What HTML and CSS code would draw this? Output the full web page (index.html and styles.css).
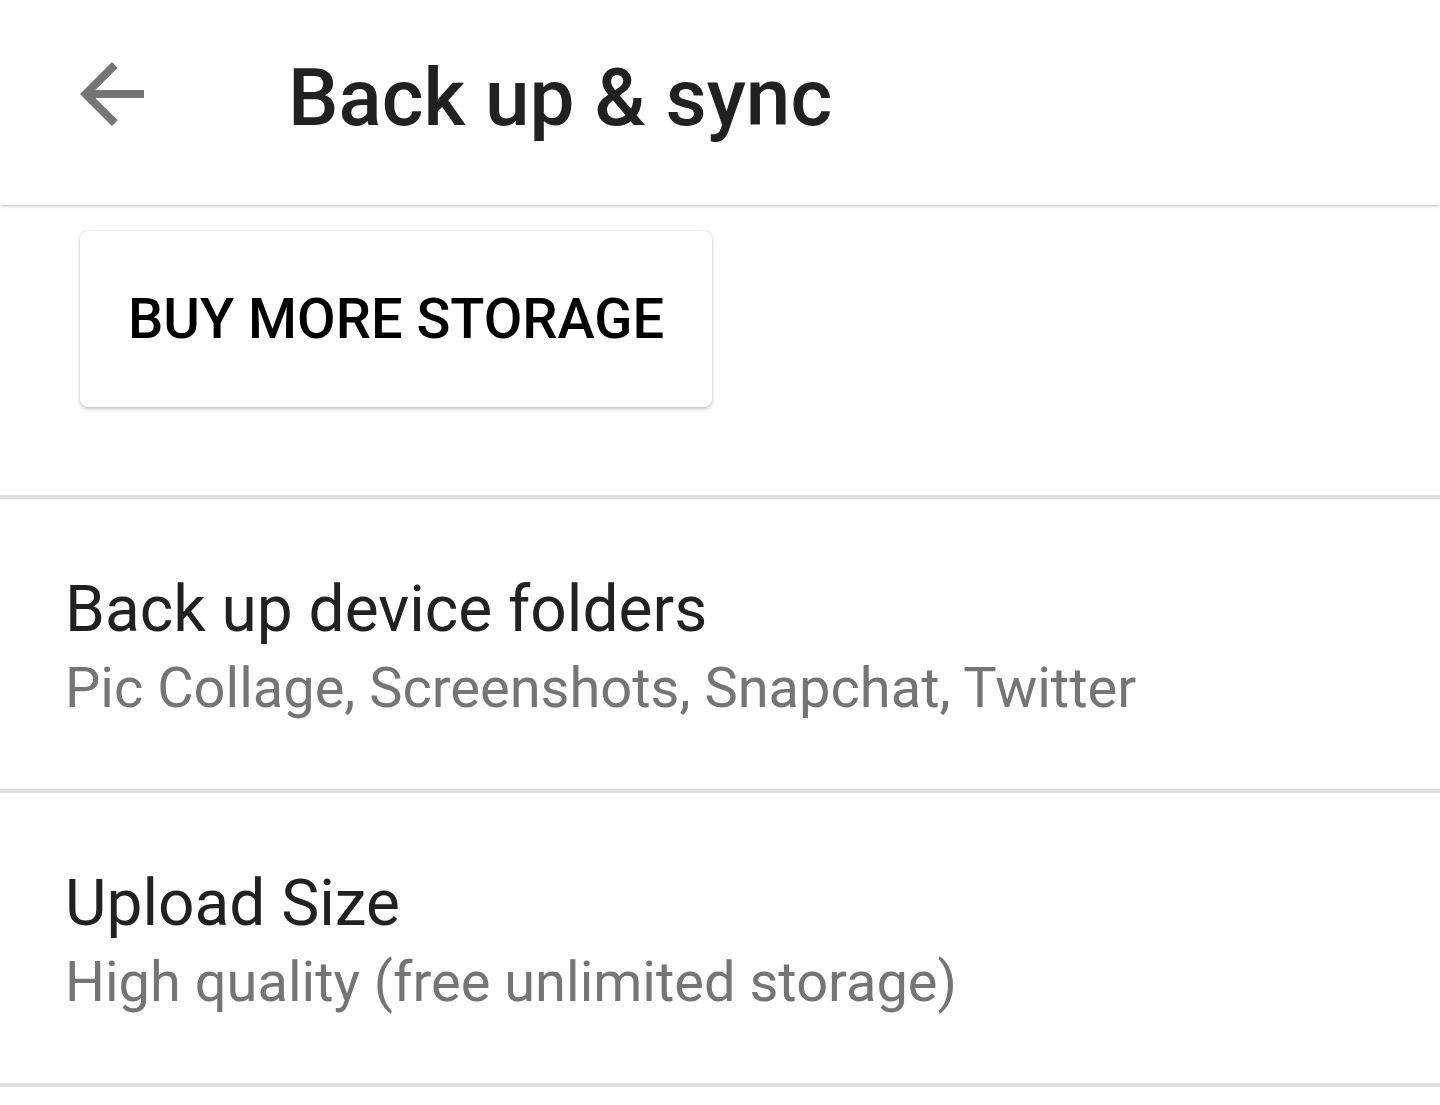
FILE: index.html
```html
<!DOCTYPE html>
<html lang="en">
<head>
<meta charset="utf-8">
<title>Back up &amp; sync</title>
<link rel="stylesheet" href="styles.css">
</head>
<body>
<header class="appbar">
  <svg class="back" viewBox="0 0 24 24" width="96" height="96" aria-hidden="true"><path d="M20 11H7.83l5.59-5.59L12 4l-8 8 8 8 1.41-1.41L7.83 13H20v-2z"/></svg>
  <h1 class="title">Back up &amp; sync</h1>
</header>
<main>
  <div class="storage">
    <button class="buy">BUY MORE STORAGE</button>
  </div>
  <div class="item">
    <div class="item-title">Back up device folders</div>
    <div class="item-sub">Pic Collage, Screenshots, Snapchat, Twitter</div>
  </div>
  <div class="item">
    <div class="item-title">Upload Size</div>
    <div class="item-sub">High quality (free unlimited storage)</div>
  </div>
  <div class="end"></div>
</main>
</body>
</html>
```
FILE: styles.css
```css
html, body {
  margin: 0;
  padding: 0;
  background: #ffffff;
  font-family: Roboto, "Noto Sans", sans-serif;
}
.appbar {
  height: 205px;
  box-sizing: border-box;
  display: flex;
  align-items: flex-start;
  padding-left: 64px;
  background: #fff;
  box-shadow: 0 1px 3px rgba(0,0,0,0.25);
  position: relative;
  z-index: 1;
}
.back {
  fill: #757575;
  margin-top: 46px;
  flex: none;
}
.title {
  margin: 58px 0 0 128px;
  font-size: 80px;
  line-height: 80px;
  font-weight: 500;
  color: #212121;
}
.storage {
  height: 290px;
  box-sizing: border-box;
  padding: 26px 0 0 80px;
}
.buy {
  width: 632px;
  height: 176px;
  border: none;
  border-radius: 8px;
  background: #fff;
  box-shadow: 0 2px 4px rgba(0,0,0,0.22), 0 0 2px rgba(0,0,0,0.1);
  font-family: Roboto, sans-serif;
  font-size: 56px;
  font-weight: 500;
  color: #000;
  padding: 0;
  display: block;
}
.item {
  height: 294px;
  box-sizing: border-box;
  border-top: 4px solid #e0e0e0;
  padding: 72px 0 0 65px;
}
.item-title {
  font-size: 64px;
  line-height: 78px;
  color: #212121;
}
.item-sub {
  font-size: 56px;
  line-height: 78px;
  color: #757575;
}
.end {
  border-top: 4px solid #e0e0e0;
}
```
